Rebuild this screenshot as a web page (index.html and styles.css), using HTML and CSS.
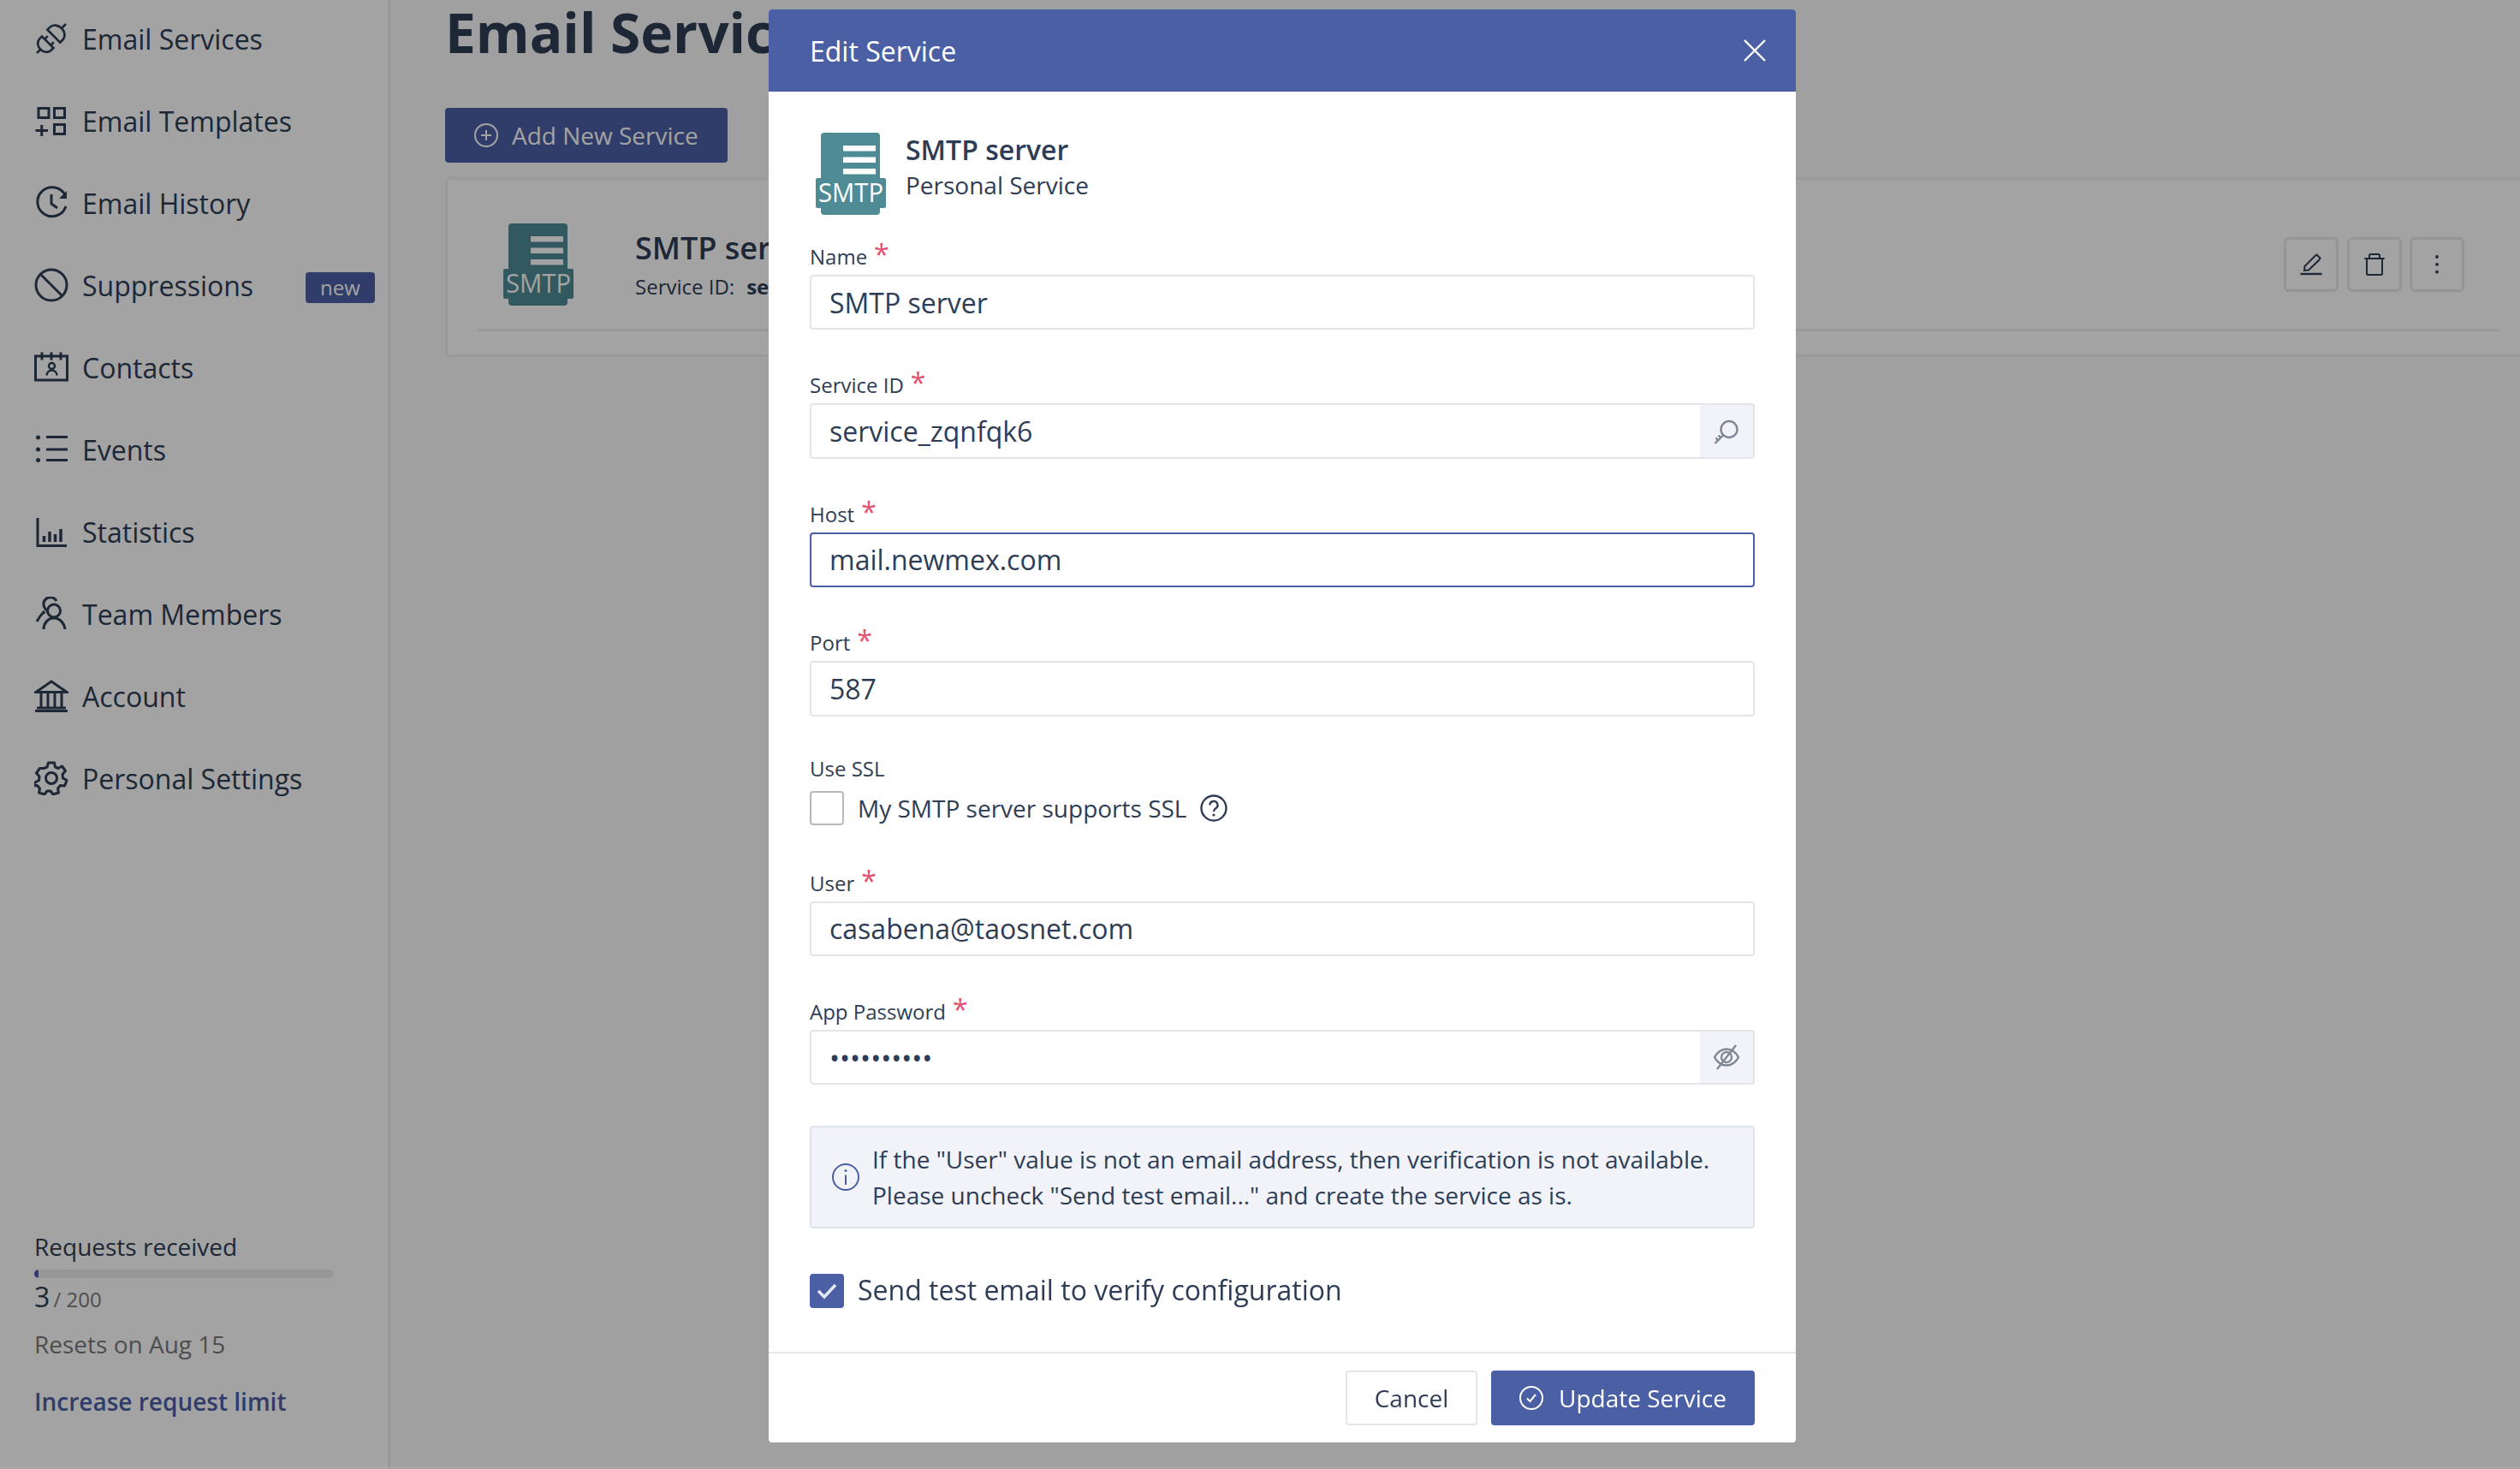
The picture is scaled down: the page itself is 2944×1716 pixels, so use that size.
FILE: index.html
```
<!DOCTYPE html>
<html lang="en">
<head>
<meta charset="utf-8">
<title>Email Services</title>
<link rel="stylesheet" href="styles.css">
</head>
<body>
<svg class="defs" width="0" height="0" aria-hidden="true">
  <symbol id="smtp-logo" viewBox="0 0 82 96">
    <rect x="6" y="0" width="69" height="96" rx="4" fill="#4f8b95"/>
    <rect x="0" y="53" width="82" height="35" rx="2" fill="#4f8b95"/>
    <rect x="32" y="15" width="38" height="6.5" fill="#fff"/>
    <rect x="32" y="28.5" width="38" height="6.5" fill="#fff"/>
    <rect x="32" y="42" width="38" height="6.5" fill="#fff"/>
    <text x="41" y="81" text-anchor="middle" font-family="Open Sans, sans-serif" font-size="31" font-weight="500" fill="#fff" textLength="76" lengthAdjust="spacingAndGlyphs">SMTP</text>
  </symbol>
</svg>
<div class="app">
  <aside class="sidebar">
    <nav class="nav">
      <a class="nav-item"><svg class="nav-icon" viewBox="0 0 40 40"><g transform="rotate(-45 20 20)" fill="none" stroke="currentColor" stroke-width="2.600"><path d="M-4 20H2"/><path d="M14 10.500H10a8 9.500 0 0 0 0 19h4z"/><path d="M14 15h5M14 25h5"/><path d="M24 9.500h4a9 10.500 0 0 1 0 21h-4z"/><path d="M37 20h7"/></g></svg><span>Email Services</span></a>
      <a class="nav-item"><svg class="nav-icon" viewBox="0 0 40 40"><g fill="none" stroke="currentColor" stroke-width="3"><rect x="5" y="5.5" width="12" height="11"/><rect x="23.5" y="5.500" width="12" height="11"/><rect x="23.5" y="24.5" width="12" height="11"/><path d="M1.500 31.500H16M8.750 25v13"/></g></svg><span>Email Templates</span></a>
      <a class="nav-item"><svg class="nav-icon" viewBox="0 0 40 40"><g fill="none" stroke="currentColor" stroke-width="3"><path d="M36 11A17 17 0 1 0 37 24"/><path d="M20 10v11l7 5"/></g><path d="M38 6v9h-9z" fill="currentColor"/></svg><span>Email History</span></a>
      <a class="nav-item"><svg class="nav-icon" viewBox="0 0 40 40"><g fill="none" stroke="currentColor" stroke-width="3"><circle cx="20" cy="20" r="18"/><path d="M7 7l26 26"/></g></svg><span>Suppressions</span><b class="badge">new</b></a>
      <a class="nav-item"><svg class="nav-icon" viewBox="0 0 40 40"><g fill="none" stroke="currentColor" stroke-width="3"><path d="M1.500 7h37v28h-37z"/><path d="M9 2.500v9M20 2.500v9M31 2.500v9"/></g><g fill="none" stroke="currentColor" stroke-width="2.400"><circle cx="20.500" cy="18.500" r="3.500"/><path d="M14.500 29.500a6 6 0 0 1 12 0"/></g></svg><span>Contacts</span></a>
      <a class="nav-item"><svg class="nav-icon" viewBox="0 0 40 40"><g fill="currentColor"><circle cx="4.500" cy="6" r="2.500"/><circle cx="4.500" cy="20" r="2.500"/><circle cx="4.500" cy="32.500" r="2.500"/><rect x="14" y="4" width="25" height="3"/><rect x="14" y="18.500" width="25" height="3"/><rect x="14" y="31" width="25" height="3"/></g></svg><span>Events</span></a>
      <a class="nav-item"><svg class="nav-icon" viewBox="0 0 40 40"><g fill="none" stroke="currentColor"><path d="M4 4v32.500h34" stroke-width="3"/><path d="M11.500 25v7M18 20v12M24.500 23v9M31 17v15" stroke-width="3.500"/></g></svg><span>Statistics</span></a>
      <a class="nav-item"><svg class="nav-icon" viewBox="0 0 40 40"><g fill="none" stroke="currentColor" stroke-width="3"><circle cx="23" cy="16.500" r="7.500"/><path d="M11 38c0-7 5-13 12-13s12 6 13 13"/><path d="M14 15a8 8 0 1 1 12-10"/><path d="M14 15l2 3M12 20l-1-2c-3 3-6 7-8 11"/></g></svg><span>Team Members</span></a>
      <a class="nav-item"><svg class="nav-icon" viewBox="0 0 40 40"><g fill="none" stroke="currentColor" stroke-width="3"><path d="M2 15.500L20 3l18 12.500z"/><path d="M1 37.500h38M3 34h34M8 17v17M16 17v17M24 17v17M32 17v17"/></g></svg><span>Account</span></a>
      <a class="nav-item"><svg class="nav-icon" viewBox="0 0 40 40"><g fill="none" stroke="currentColor" stroke-width="3" stroke-linejoin="round"><circle cx="20" cy="20" r="6.500"/><path d="M16.500 2h7l1 5 3.500 1.500 4.500-2.500 4 5.500-3.500 4 .5 4.500 4.500 2.500-2.500 6.500-5-.5-3 3.500 1 5-6.500 2-3-4h-4l-3 4-6.500-2 1-5-3-3.500-5 .5L1 25l4.500-2.500.5-4.500-3.500-4 4-5.500L11.500 8.500 15 7z"/></g></svg><span>Personal Settings</span></a>
    </nav>
    <div class="quota">
      <div class="quota-title">Requests received</div>
      <div class="quota-bar"><div class="quota-fill"></div></div>
      <div class="quota-count"><span class="quota-used">3</span><span class="quota-total"> / 200</span></div>
      <div class="quota-reset">Resets on Aug 15</div>
      <a class="quota-link">Increase request limit</a>
    </div>
  </aside>
  <main class="main">
    <h1 class="page-title">Email Services</h1>
    <button class="btn-add" type="button"><svg class="icon-28" viewBox="0 0 28 28"><g fill="none" stroke="currentColor" stroke-width="2"><circle cx="14" cy="14" r="13"/><path d="M14 8v12M8 14h12"/></g></svg>Add New Service</button>
    <section class="card">
      <div class="card-row">
        <svg class="logo"><use href="#smtp-logo"/></svg>
        <div class="card-info">
          <div class="card-name">SMTP server</div>
          <div class="card-id">Service ID:<b class="card-id-value">service_zqnfqk6</b></div>
        </div>
        <div class="card-actions">
          <button class="btn-icon" type="button"><svg class="icon-28" viewBox="0 0 28 28"><path d="M6 21l.5-5L18 4.500l2.500-2 4 4L23 9 11 20.500z" fill="none" stroke="currentColor" stroke-width="2"/><path d="M1.500 25h25" stroke="currentColor" stroke-width="2.400"/></svg></button>
          <button class="btn-icon" type="button"><svg class="icon-28" viewBox="0 0 28 28"><g fill="none" stroke="currentColor" stroke-width="2"><path d="M2.300 7h23.400M5 7v17.500a1.500 1.500 0 0 0 1.500 1.500h15a1.500 1.500 0 0 0 1.500-1.500V7M8 7V3.500A1.500 1.500 0 0 1 9.500 2h9A1.500 1.500 0 0 1 20 3.500V7"/></g></svg></button>
          <button class="btn-icon" type="button"><svg class="icon-28" viewBox="0 0 28 28"><g fill="currentColor"><circle cx="14" cy="5" r="1.900"/><circle cx="14" cy="13.800" r="1.900"/><circle cx="14" cy="22.700" r="1.900"/></g></svg></button>
        </div>
      </div>
    </section>
  </main>
</div>
<div class="overlay">
  <div class="modal">
    <header class="modal-head">
      <span>Edit Service</span>
      <svg class="modal-close" viewBox="0 0 26 26"><path d="M1 1l24 24M25 1L1 25" fill="none" stroke="#fff" stroke-width="2.400"/></svg>
    </header>
    <div class="modal-body">
      <div class="svc-head">
        <svg class="logo"><use href="#smtp-logo"/></svg>
        <div>
          <div class="svc-name">SMTP server</div>
          <div class="svc-type">Personal Service</div>
        </div>
      </div>
      <div class="field">
        <label class="label">Name<i class="req">*</i></label>
        <div class="control"><input class="input" type="text" value="SMTP server"></div>
      </div>
      <div class="field">
        <label class="label">Service ID<i class="req">*</i></label>
        <div class="control"><input class="input" type="text" value="service_zqnfqk6">
          <span class="adorn"><svg class="icon-30" viewBox="0 0 30 30"><g fill="none" stroke="#7f8894" stroke-width="2.400"><circle cx="18" cy="12.500" r="9.500"/><path d="M11 19.500L1.500 29M5.500 25.500l-3-3M8.500 22.500l-3-3"/></g></svg></span>
        </div>
      </div>
      <div class="field">
        <label class="label">Host<i class="req">*</i></label>
        <div class="control"><input class="input input-focus" type="text" value="mail.newmex.com"></div>
      </div>
      <div class="field field-ssl">
        <label class="label">Port<i class="req">*</i></label>
        <div class="control"><input class="input" type="text" value="587"></div>
      </div>
      <div class="ssl">
        <div class="label-plain">Use SSL</div>
        <div class="check-row">
          <span class="box"></span>
          <span class="check-small">My SMTP server supports SSL</span>
          <svg class="icon-32" viewBox="0 0 32 32"><g fill="none" stroke="#2e3d55" stroke-width="2.400"><circle cx="16" cy="16" r="14.500"/><path d="M11.500 12.500a4.500 4.500 0 1 1 6.800 3.800c-1.600 1-2.300 1.900-2.300 3.700"/></g><circle cx="16" cy="24" r="1.600" fill="#2e3d55"/></svg>
        </div>
      </div>
      <div class="field">
        <label class="label">User<i class="req">*</i></label>
        <div class="control"><input class="input" type="text" value="casabena@taosnet.com"></div>
      </div>
      <div class="field field-pw">
        <label class="label">App Password<i class="req">*</i></label>
        <div class="control"><input class="input" type="password" value="1234567890">
          <span class="adorn"><svg class="icon-30" viewBox="0 0 30 30"><g fill="none" stroke="#7f8894" stroke-width="2.400"><path d="M1 15C5 8 10 5.500 15 5.500S25 8 29 15c-4 7-9 9.500-14 9.500S5 22 1 15z"/><circle cx="15" cy="15" r="6"/><path d="M26 1L4 29"/></g></svg></span>
        </div>
      </div>
      <div class="alert">
        <svg class="alert-icon" viewBox="0 0 32 36"><g fill="none" stroke="#4b5fa5" stroke-width="2"><circle cx="16" cy="18" r="15"/><path d="M16 15.500V27"/></g><circle cx="16" cy="10.500" r="1.500" fill="#4b5fa5"/></svg>
        <p class="alert-text">If the "User" value is not an email address, then verification is not available.<br>Please uncheck "Send test email..." and create the service as is.</p>
      </div>
      <div class="check-row check-test">
        <span class="box box-on"><svg class="box-tick" viewBox="0 0 24 24"><path d="M2 12l7 7L22 5" fill="none" stroke="#e6e9f3" stroke-width="3.500"/></svg></span>
        <span class="check-big">Send test email to verify configuration</span>
      </div>
    </div>
    <footer class="modal-foot">
      <button class="btn btn-cancel" type="button">Cancel</button>
      <button class="btn btn-primary" type="button"><svg class="icon-28" viewBox="0 0 28 28"><g fill="none" stroke="#fff" stroke-width="2"><circle cx="14" cy="14" r="13"/><path d="M9 14.500l3.500 3.500L19 10"/></g></svg>Update Service</button>
    </footer>
  </div>
</div>
</body>
</html>
```

FILE: styles.css
```
* { box-sizing: border-box; }
html, body { margin: 0; height: 100%; }
body {
  font-family: "Open Sans", sans-serif;
  color: #2e3d55;
  overflow: hidden;
  background: #fafafa;
}
.defs { position: absolute; }
button, input { font-family: inherit; }

.app { display: flex; height: 1716px; }

.sidebar {
  width: 456px;
  flex: none;
  background: #fff;
  border-right: 3px solid #efefef;
  display: flex;
  flex-direction: column;
  padding-left: 40px;
}
.nav { display: flex; flex-direction: column; margin-top: -3px; }
.nav-item {
  display: flex;
  align-items: center;
  height: 96px;
  font-size: 32px;
  gap: 16px;
}
.nav-icon { width: 40px; height: 40px; flex: none; }
.badge {
  margin-left: auto;
  margin-right: 15px;
  width: 81px;
  height: 36px;
  border-radius: 4px;
  background: #4b5fa5;
  color: #fff;
  font-size: 24px;
  font-weight: 500;
  line-height: 36px;
  text-align: center;
  align-self: center;
  margin-top: 6px;
}
.quota { margin-top: auto; padding-bottom: 59px; font-size: 28px; }
.quota-title { line-height: 40px; }
.quota-bar {
  width: 350px;
  height: 10px;
  margin-top: 7px;
  border-radius: 5px;
  background: #ececec;
  overflow: hidden;
}
.quota-fill { width: 5px; height: 100%; background: #4b5fa5; border-radius: 5px; }
.quota-count { line-height: 46px; margin-top: -1px; }
.quota-used { font-size: 32px; }
.quota-total { font-size: 24px; color: #7a7a7a; margin-left: -2px; }
.quota-reset { color: #7a7a7a; line-height: 40px; margin-top: 9px; }
.quota-link { display: block; color: #4b5fa5; font-weight: 600; line-height: 40px; margin-top: 27px; }

.main { flex: 1; min-width: 0; padding-left: 64px; overflow: hidden; }
.page-title { margin: -2px 0 0; font-size: 64px; font-weight: 700; line-height: 80px; }
.btn-add {
  display: flex;
  align-items: center;
  gap: 16px;
  width: 330px;
  height: 64px;
  margin-top: 48px;
  padding: 0 0 0 34px;
  border: 0;
  border-radius: 4px;
  background: #4b5fa5;
  color: #fff;
  font-size: 28px;
}
.icon-28 { width: 28px; height: 28px; flex: none; }
.icon-30 { width: 30px; height: 30px; }
.icon-32 { width: 32px; height: 32px; flex: none; }
.card {
  width: 2437px;
  height: 210px;
  margin-top: 17px;
  padding: 0 34px;
  background: #fff;
  border: 3px solid #efefef;
  border-radius: 6px;
}
.card-row {
  height: 177px;
  display: flex;
  align-items: center;
  padding: 24px 41px 0 31px;
  border-bottom: 3px solid #efefef;
}
.logo { width: 82px; height: 96px; flex: none; }
.card-info { margin-left: 72px; }
.card-name { font-size: 36px; font-weight: 600; line-height: 50px; }
.card-id { font-size: 24px; line-height: 36px; margin-top: 2px; }
.card-id-value { margin-left: 14px; font-weight: 700; }
.card-actions { margin-left: auto; display: flex; gap: 9.5px; }
.btn-icon {
  width: 64px;
  height: 64px;
  padding: 0;
  display: flex;
  align-items: center;
  justify-content: center;
  background: transparent;
  border: 3px solid #e9e9e9;
  border-radius: 6px;
  color: #2e3d55;
}

.overlay {
  position: fixed;
  inset: 0;
  background: rgba(0, 0, 0, 0.36);
  padding: 11px 0 0 898px;
}
.overlay::after {
  content: "";
  position: absolute;
  left: 0;
  right: 0;
  bottom: 0;
  height: 3px;
  background: rgba(255, 255, 255, 0.05);
}
.modal {
  width: 1200px;
  height: 1674px;
  background: #fff;
  border-radius: 4px;
  overflow: hidden;
  display: flex;
  flex-direction: column;
}
.modal-head {
  height: 96px;
  flex: none;
  background: #4b5fa5;
  color: #fff;
  font-size: 32px;
  display: flex;
  align-items: center;
  justify-content: space-between;
  padding: 0 35px 0 48px;
}
.modal-close { width: 26px; height: 26px; }
.modal-body { flex: 1; padding: 48px 48px 0; }
.svc-head { display: flex; gap: 23px; margin: 0 0 31px 7px; height: 96px; }
.svc-name { font-size: 32px; font-weight: 600; line-height: 44px; margin-top: -2px; }
.svc-type { font-size: 28px; line-height: 38px; }
.field { margin-bottom: 47px; }
.field-ssl { margin-bottom: 43px; }
.field-pw { margin-bottom: 48px; }
.label {
  display: flex;
  height: 36px;
  margin-bottom: 3px;
  font-size: 24px;
  line-height: 35px;
}
.req {
  margin-left: 8px;
  font-size: 32px;
  font-style: normal;
  line-height: 30px;
  color: #e5506e;
}
.control { display: flex; position: relative; }
.input {
  width: 100%;
  height: 64.4px;
  padding: 0 21px;
  border: 2px solid #e3e5e9;
  border-radius: 4px;
  background: #fff;
  color: #2e3d55;
  font-size: 32px;
  outline: 0;
}
.input-focus { border-color: #4b5fa5; }
.adorn {
  position: absolute;
  right: 0;
  top: 0;
  width: 64px;
  height: 100%;
  display: flex;
  align-items: center;
  justify-content: center;
  background: #f1f3f8;
  border: 2px solid #e3e5e9;
  border-left: 0;
  border-radius: 0 4px 4px 0;
}
.ssl { margin-bottom: 50px; }
.label-plain { font-size: 24px; line-height: 36px; margin-bottom: 8px; }
.check-row { display: flex; align-items: center; }
.box {
  width: 40px;
  height: 40px;
  flex: none;
  display: flex;
  align-items: center;
  justify-content: center;
  border: 2px solid #b9b9b9;
  border-radius: 4px;
  background: #fff;
}
.box-on { background: #4b5fa5; border-color: #4b5fa5; }
.box-tick { width: 24px; height: 24px; }
.check-small { margin: 0 16px 0 16px; font-size: 28px; }
.check-big { margin: -4px 0 0 16px; font-size: 32px; }
.alert {
  display: flex;
  align-items: center;
  height: 120px;
  padding-left: 24px;
  gap: 15px;
  background: #f1f3f8;
  border: 2px solid #dfe3ef;
  border-radius: 4px;
}
.alert-icon { width: 32px; height: 36px; flex: none; }
.alert-text { margin: 0; font-size: 28px; line-height: 42px; }
.check-test { margin-top: 53px; }
.modal-foot {
  flex: none;
  height: 106px;
  border-top: 2px solid #e5e6ea;
  display: flex;
  justify-content: flex-end;
  gap: 16px;
  padding: 20px 48px 0;
}
.btn {
  height: 64px;
  display: flex;
  align-items: center;
  justify-content: center;
  border-radius: 4px;
  font-size: 28px;
  padding: 0;
}
.btn-cancel { width: 154px; background: #fff; border: 2px solid #e5e6ea; color: #2e3d55; }
.btn-primary { width: 308px; gap: 18px; background: #4b5fa5; border: 0; color: #fff; }
```
